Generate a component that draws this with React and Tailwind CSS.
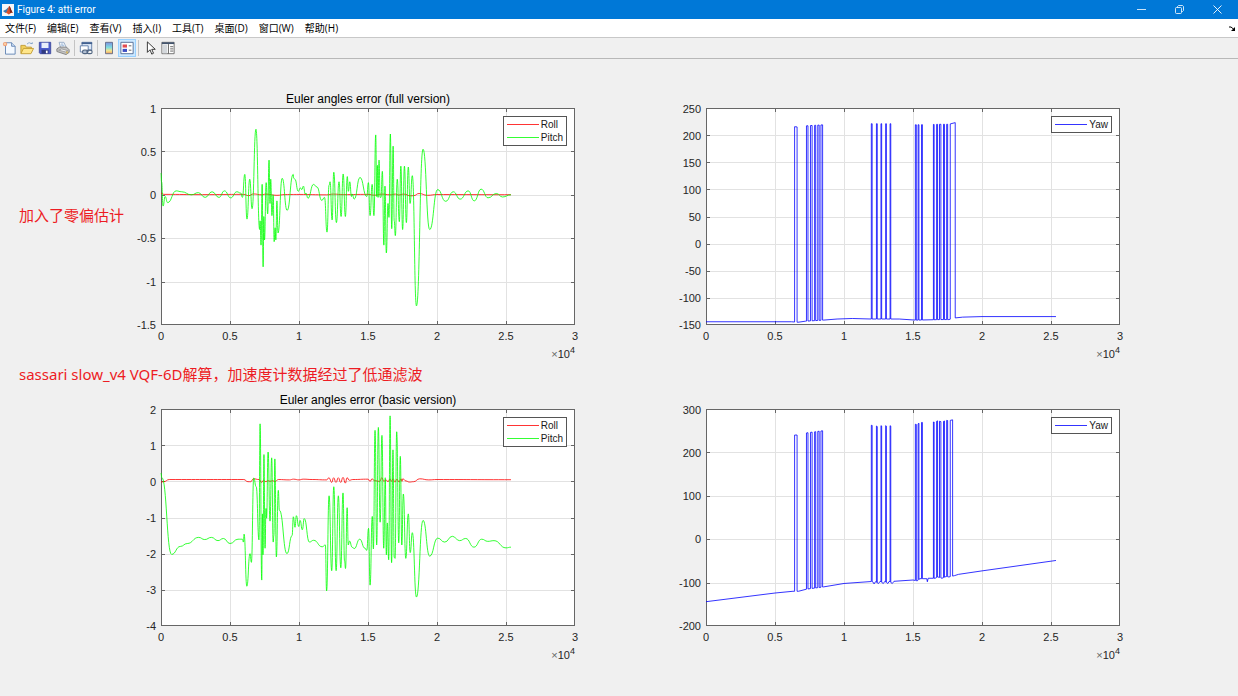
import { useMemo } from "react";

const X_TICKS = [0, 0.5, 1, 1.5, 2, 2.5, 3];
const VIEW_W = 414;
const VIEW_H = 217;

const MENUS = ["文件(F)", "编辑(E)", "查看(V)", "插入(I)", "工具(T)", "桌面(D)", "窗口(W)", "帮助(H)"];

// Series are listed by their turning points, x in units of 1e4 samples.
const ROLL_FULL = [
    [0, 0.02], [0.02, 0.005], [0.3, 0.002], [0.6, 0.005], [0.635, -0.01], [0.67, 0.01], [0.73, 0], [0.76, 0.008],
    [0.84, -0.006], [0.9, 0.003], [1, 0.004], [1.2, 0], [1.25, 0.008], [1.32, 0.002], [1.5, 0.005], [1.55, -0.004],
    [1.6, 0.008], [1.66, 0], [1.7, 0.008], [1.72, -0.002], [1.76, 0.008], [1.81, -0.012], [1.83, -0.01],
    [1.87, 0.015], [1.93, -0.006], [2, 0.003], [2.536, 0.001],
];

const PITCH_FULL = [
    [0, 0.25], [0.004, 0.15], [0.015, -0.13], [0.03, -0.02], [0.048, -0.09], [0.11, 0.045], [0.15, 0.035], [0.22, 0],
    [0.27, 0.025], [0.32, -0.03], [0.37, 0.035], [0.42, -0.03], [0.46, 0.045], [0.505, -0.035], [0.55, 0.035],
    [0.578, 0.02], [0.59, -0.03], [0.607, 0.235], [0.623, -0.28], [0.643, 0.18], [0.66, -0.16], [0.688, 0.755],
    [0.715, -0.4], [0.718, -0.3], [0.725, -0.58], [0.733, 0.12], [0.74, -0.83], [0.745, -0.25], [0.75, -0.52],
    [0.762, 0.14], [0.773, -0.22], [0.783, 0.4], [0.79, -0.1], [0.795, 0.18], [0.804, -0.24], [0.813, 0],
    [0.82, -0.54], [0.827, -0.38], [0.832, -0.52], [0.84, -0.07], [0.848, -0.44], [0.878, 0.19], [0.914, -0.18],
    [0.958, 0.235], [0.962, 0.19], [0.97, 0.18], [0.995, 0.04], [1.01, 0.08], [1.02, 0.06], [1.032, 0.1],
    [1.045, 0.01], [1.05, 0.02], [1.065, -0.04], [1.105, 0.12], [1.13, 0.09], [1.165, -0.065], [1.185, -0.03],
    [1.203, -0.43], [1.218, 0.11], [1.225, 0.15], [1.24, -0.29], [1.252, 0.26], [1.271, -0.32], [1.29, 0.15],
    [1.305, -0.25], [1.32, 0.24], [1.336, -0.25], [1.35, 0.21], [1.358, 0.04], [1.368, 0.15], [1.38, -0.02],
    [1.385, 0.01], [1.4, -0.05], [1.442, 0.2], [1.491, -0.02], [1.503, 0.14], [1.515, -0.24], [1.53, 0.12],
    [1.543, -0.24], [1.556, 0.69], [1.563, -0.02], [1.568, 0.34], [1.573, -0.03], [1.58, 0.4], [1.588, -0.03],
    [1.594, -0.03], [1.604, 0.27], [1.615, -0.58], [1.623, 0.1], [1.633, -0.67], [1.645, -0.1], [1.652, -0.26],
    [1.662, 0.7], [1.672, -0.39], [1.682, 0.56], [1.69, -0.3], [1.698, -0.47], [1.712, 0.18], [1.727, -0.31],
    [1.738, 0.33], [1.751, -0.4], [1.764, 0.33], [1.778, -0.32], [1.792, 0.32], [1.805, -0.1], [1.821, 0.22],
    [1.851, -1.28], [1.899, 0.525], [1.947, -0.4], [2.005, 0.06], [2.063, -0.075], [2.118, 0.035], [2.168, -0.05],
    [2.226, 0.045], [2.27, -0.07], [2.32, 0.065], [2.37, -0.035], [2.43, 0.015], [2.475, -0.025], [2.536, 0],
];

const ROLL_BASIC = [
    [0, -0.02], [0.02, -0.01], [0.06, 0.05], [0.6, 0.05], [0.63, -0.01], [0.65, -0.01], [0.67, 0.07], [0.71, 0.05],
    [0.73, -0.03], [0.742, 0.03], [0.76, -0.01], [0.775, 0.02], [0.79, 0], [0.81, 0.02], [0.825, -0.01], [0.85, 0.05],
    [0.93, 0.04], [0.96, 0.06], [1, 0.04], [1.03, 0.06], [1.1, 0.05], [1.2, 0.04], [1.217, 0.1], [1.237, -0.03],
    [1.251, 0.1], [1.268, -0.03], [1.285, 0.1], [1.302, -0.03], [1.319, 0.11], [1.336, -0.05], [1.348, 0.1],
    [1.365, 0.03], [1.39, 0.05], [1.5, 0.06], [1.515, 0], [1.53, 0.07], [1.545, 0.02], [1.585, 0], [1.6, 0.1],
    [1.615, 0], [1.63, 0.04], [1.645, -0.01], [1.66, 0.07], [1.67, 0], [1.682, 0.07], [1.694, -0.02], [1.71, 0.06],
    [1.725, -0.02], [1.74, 0.07], [1.746, 0], [1.752, 0.07], [1.775, 0.01], [1.8, -0.02], [1.83, -0.01],
    [1.875, 0.07], [1.94, 0.04], [2, 0.05], [2.536, 0.045],
];

const PITCH_BASIC = [
    [0, 0.23], [0.006, 0.1], [0.077, -2.02], [0.14, -1.8], [0.19, -1.72], [0.273, -1.55], [0.317, -1.61],
    [0.365, -1.55], [0.413, -1.64], [0.452, -1.58], [0.5, -1.72], [0.558, -1.6], [0.59, -1.6], [0.597, -1.68],
    [0.602, -1.46], [0.622, -2.9], [0.645, -2], [0.655, -2.24], [0.672, 0.09], [0.69, -0.15], [0.71, -1.62],
    [0.718, 1.59], [0.73, -2.73], [0.735, -0.9], [0.739, -2.03], [0.746, 0.74], [0.754, -1.85], [0.761, -0.75],
    [0.765, -1.02], [0.776, 0.81], [0.79, -1.1], [0.802, 0.65], [0.813, -1.68], [0.818, -1.5], [0.825, 0.62],
    [0.836, -2.09], [0.85, -0.25], [0.858, -0.8], [0.913, -2], [0.95, -1.5], [0.959, -0.98], [0.971, -1.27],
    [0.981, -0.95], [0.998, -1.25], [1.008, -1.08], [1.024, -1.34], [1.038, -1.03], [1.075, -1.68], [1.106, -1.63],
    [1.168, -1.81], [1.191, -1.76], [1.2, -3.03], [1.218, -0.4], [1.237, -2.47], [1.252, -0.15], [1.269, -2.47],
    [1.285, -0.4], [1.303, -2.39], [1.319, -0.32], [1.33, -2.2], [1.337, -2.41], [1.349, -0.73], [1.357, -1.76],
    [1.366, -1.65], [1.385, -1.82], [1.4, -1.86], [1.44, -1.6], [1.478, -1.85], [1.491, -1.91], [1.504, -1.3],
    [1.515, -2.87], [1.531, -0.97], [1.539, -1.87], [1.551, 1.41], [1.563, -1.76], [1.575, 1.49], [1.588, -1.13],
    [1.601, 1.27], [1.614, -1.85], [1.625, 0.1], [1.633, -2.03], [1.64, -1.15], [1.65, -2.17], [1.66, 1.81],
    [1.671, -2.25], [1.681, 0.87], [1.69, -2.1], [1.696, -2.13], [1.708, 1.37], [1.723, -1.7], [1.734, 0.69],
    [1.745, -1.76], [1.756, -0.35], [1.774, -2.13], [1.792, -0.9], [1.806, -1.97], [1.821, -1.42], [1.851, -3.2],
    [1.899, -1.08], [1.947, -2.07], [2.005, -1.57], [2.056, -1.68], [2.111, -1.52], [2.164, -1.64], [2.208, -1.58],
    [2.268, -1.82], [2.324, -1.6], [2.368, -1.66], [2.413, -1.64], [2.5, -1.84], [2.536, -1.82],
];

// Spans where the yaw error wraps around by 360 degrees.
const WRAPS = [
    [0.642, 0.66], [0.728, 0.739], [0.757, 0.769], [0.787, 0.795], [0.81, 0.82], [0.833, 0.845],
    [1.198, 1.204], [1.235, 1.241], [1.268, 1.273], [1.302, 1.307], [1.334, 1.339],
    [1.517, 1.524], [1.537, 1.543], [1.562, 1.568],
    [1.648, 1.653], [1.671, 1.678], [1.692, 1.702], [1.721, 1.728], [1.744, 1.751],
];

const YAW_FULL_BASE = [
    [0, -144], [0.62, -144], [0.665, -145], [0.72, -143], [0.85, -141], [0.95, -139], [1.06, -138], [1.2, -139],
    [1.4, -139], [1.52, -141], [1.7, -140], [1.76, -140], [1.805, -137], [1.86, -135.5], [2, -134.5], [2.536, -134.5],
];

const YAW_BASIC_BASE = [
    [0, -144], [0.5, -124], [0.63, -120], [0.67, -120], [0.73, -115], [0.85, -110], [1, -102], [1.2, -97.5],
    [1.208, -98], [1.218, -103], [1.228, -98], [1.25, -102], [1.262, -97], [1.285, -102], [1.296, -97],
    [1.318, -102], [1.328, -97], [1.35, -102], [1.362, -97], [1.5, -94], [1.53, -96], [1.55, -91], [1.6, -91],
    [1.604, -98], [1.61, -90], [1.66, -90], [1.68, -87], [1.71, -90], [1.74, -86], [1.76, -87], [1.8, -84],
    [1.83, -81], [2, -73], [2.536, -49],
];

function addWraps(base, wraps) {
    const level = (x) => {
        const i = base.findIndex((p) => p[0] >= x);
        if (i <= 0) return base[0][1];
        const [x0, y0] = base[i - 1];
        const [x1, y1] = base[i];
        return y0 + ((x - x0) / (x1 - x0)) * (y1 - y0);
    };
    const points = base.filter(([x]) => !wraps.some(([a, b]) => x >= a && x <= b));
    for (const [a, b] of wraps) {
        points.push([a, level(a)], [a, level(a) + 360], [b, level(b) + 360], [b, level(b)]);
    }
    // sort is stable, so the two points of each vertical edge stay in order
    return points.sort((p, q) => p[0] - q[0]);
}

const YAW_FULL = addWraps(YAW_FULL_BASE, [...WRAPS, [1.77, 1.806]]);
const YAW_BASIC = addWraps(YAW_BASIC_BASE, [...WRAPS, [1.77, 1.787]]);

const FULL_SERIES = [
    { name: "Roll", color: "#ff0000", points: ROLL_FULL, smooth: true },
    { name: "Pitch", color: "#00ff00", points: PITCH_FULL, smooth: true },
];
const BASIC_SERIES = [
    { name: "Roll", color: "#ff0000", points: ROLL_BASIC, smooth: true },
    { name: "Pitch", color: "#00ff00", points: PITCH_BASIC, smooth: true },
];
const YAW_FULL_SERIES = [{ name: "Yaw", color: "#0000ff", points: YAW_FULL }];
const YAW_BASIC_SERIES = [{ name: "Yaw", color: "#0000ff", points: YAW_BASIC }];

const FULL_TICKS = [1, 0.5, 0, -0.5, -1, -1.5];
const BASIC_TICKS = [2, 1, 0, -1, -2, -3, -4];
const YAW_FULL_TICKS = [250, 200, 150, 100, 50, 0, -50, -100, -150];
const YAW_BASIC_TICKS = [300, 200, 100, 0, -100, -200];

function toPath(points, smooth, max, min) {
    let d = "";
    let px = 0;
    let py = 0;
    points.forEach(([vx, vy], i) => {
        const x = (vx / 3) * VIEW_W;
        const y = ((max - vy) / (max - min)) * VIEW_H;
        if (i === 0) d += `M${x.toFixed(2)} ${y.toFixed(2)}`;
        else if (smooth) {
            const mx = ((px + x) / 2).toFixed(2);
            d += `C${mx} ${py.toFixed(2)} ${mx} ${y.toFixed(2)} ${x.toFixed(2)} ${y.toFixed(2)}`;
        } else d += `L${x.toFixed(2)} ${y.toFixed(2)}`;
        px = x;
        py = y;
    });
    return d;
}

function Plot({ series, ticks, className }) {
    const max = ticks[0];
    const min = ticks[ticks.length - 1];
    const paths = useMemo(
        () => series.map((s) => ({ ...s, d: toPath(s.points, s.smooth, max, min) })),
        [series, max, min]
    );

    return (
        <div className={`relative min-h-0 ${className}`}>
            <svg
                className="block h-full w-full overflow-visible"
                viewBox={`0 0 ${VIEW_W} ${VIEW_H}`}
                preserveAspectRatio="none"
                fill="none"
            >
                <rect width={VIEW_W} height={VIEW_H} fill="#fff" />
                {X_TICKS.slice(1, -1).map((t) => {
                    const x = Math.round((t / 3) * VIEW_W) + 0.5;
                    return (
                        <g key={t}>
                            <path d={`M${x} 0V${VIEW_H}`} stroke="#e2e2e2" />
                            <path d={`M${x} 0v4M${x} ${VIEW_H}v-4`} stroke="#666" />
                        </g>
                    );
                })}
                {ticks.slice(1, -1).map((t) => {
                    const y = Math.round(((max - t) / (max - min)) * VIEW_H) + 0.5;
                    return (
                        <g key={t}>
                            <path d={`M0 ${y}H${VIEW_W}`} stroke="#e2e2e2" />
                            <path d={`M0 ${y}h4M${VIEW_W} ${y}h-4`} stroke="#666" />
                        </g>
                    );
                })}
                <rect x="0.5" y="0.5" width={VIEW_W - 1} height={VIEW_H - 1} stroke="#666" />
                {paths.map((s) => (
                    <path key={s.name} d={s.d} stroke={s.color} strokeWidth="0.8" />
                ))}
            </svg>
            <ul className="absolute top-2 right-2 border border-[#555] bg-white px-[3px] py-px text-[10px] leading-[13px] text-[#1a1a1a]">
                {series.map((s) => (
                    <li key={s.name} className="flex items-center gap-0.5">
                        <svg width="32" height="1" viewBox="0 0 32 1">
                            <path d="M0 .5H32" stroke={s.color} strokeWidth="0.8" />
                        </svg>
                        {s.name}
                    </li>
                ))}
            </ul>
        </div>
    );
}

function YLabels({ ticks, className }) {
    return (
        <div className={`flex flex-col justify-between pt-px pr-[5px] text-[11px] text-[#262626] ${className}`}>
            {ticks.map((t) => (
                <span key={t} className="flex h-0 items-center justify-end">{t}</span>
            ))}
        </div>
    );
}

function XLabels({ className }) {
    return (
        <div className={`pt-[3px] text-[11px] leading-4 text-[#262626] ${className}`}>
            <div className="flex justify-between">
                {X_TICKS.map((t) => (
                    <span key={t} className="flex w-0 justify-center">{t}</span>
                ))}
            </div>
            <div className="flex items-center justify-end">
                <span className="text-[#666]">×</span>
                <span>10</span>
                <span className="pb-2 text-[9px] leading-3">4</span>
            </div>
        </div>
    );
}

function Tool({ label, active, children }) {
    return (
        <button
            type="button"
            aria-label={label}
            className={`flex h-[18px] w-[18px] items-center justify-center border ${
                active ? "border-[#99d1ff] bg-[#cce8ff]" : "border-transparent"
            }`}
        >
            <svg width="14" height="14" viewBox="0 0 16 16" fill="none" className="shrink-0">
                {children}
            </svg>
        </button>
    );
}

function Separator() {
    return <span className="mx-0.5 h-4 w-px bg-[#c4c4c4]" />;
}

function Toolbar() {
    return (
        <div className="flex h-[21px] shrink-0 items-center border-b border-[#b8b8b8] bg-[#f0f0f0]">
            <Tool label="新建">
                <path d="M4 2h7l4 4v9H4z" fill="#f4f9ff" stroke="#5b7fb0" />
                <path d="M11 2v4h4" fill="#cfe0f5" stroke="#5b7fb0" />
                <circle cx="3.500" cy="3.500" r="2.500" fill="#f0a27c" />
                <circle cx="3.500" cy="3.500" r="1.200" fill="#ffd9a8" />
            </Tool>
            <Tool label="打开">
                <path d="M1 14V5h5l1 2h6v2" fill="#f2d05c" stroke="#c09a30" />
                <path d="M1 14.500L4 8.500h11.500l-3 6z" fill="#ffe68a" stroke="#c09a30" />
                <path d="M8 3.500c2-2 4-2 5 0" stroke="#7fa2c8" />
                <path d="M11.500 3.500h3V1z" fill="#7fa2c8" />
            </Tool>
            <Tool label="保存">
                <path d="M1.500 1.500h13v13h-12l-1-1z" fill="#4c5ccc" stroke="#3c489c" />
                <path d="M4 2h8v6H4z" fill="#e8eefb" />
                <path d="M4 10h8v4.500H4z" fill="#2f3a80" />
                <path d="M9 11h2v3H9z" fill="#fff" />
            </Tool>
            <Tool label="打印">
                <path d="M5.500 8L3.500 1.500H9L12 8" fill="#fff" stroke="#8fa6c4" />
                <path d="M5.500 3.500h3M6 5.500h3.500" stroke="#7ba0ce" />
                <path d="M1 9l3-2h8l3 3v3l-3.500 2.500L1 12z" fill="#c4c4c4" stroke="#7a7a7a" />
                <path d="M3 10.500l8 2 2.500-1.500-7-2z" fill="#f2f2f2" stroke="#999" />
                <circle cx="12.500" cy="13" r="1.200" fill="#d8b860" />
            </Tool>
            <Separator />
            <Tool label="链接绘图">
                <path d="M3.500 1.500h11v9h-11z" fill="#dce8f8" stroke="#5a78a6" />
                <path d="M3 2.500h12" stroke="#42608f" strokeWidth="2" />
                <path d="M1.500 5.500h9v7h-9z" fill="#fff" stroke="#5a78a6" />
                <rect x="4" y="10.500" width="6" height="4" rx="2" stroke="#526783" strokeWidth="1.300" />
                <rect x="9" y="10.500" width="6" height="4" rx="2" stroke="#526783" strokeWidth="1.300" />
            </Tool>
            <Separator />
            <Tool label="插入颜色栏">
                <defs>
                    <linearGradient id="colorbar" x1="0" y1="0" x2="0" y2="1">
                        <stop offset="0" stopColor="#7b8fe0" />
                        <stop offset="0.45" stopColor="#7fdde0" />
                        <stop offset="0.75" stopColor="#f4e58b" />
                        <stop offset="1" stopColor="#ee9b62" />
                    </linearGradient>
                </defs>
                <path d="M4 1.500h8v13H4z" fill="url(#colorbar)" stroke="#5f6a84" />
            </Tool>
            <Tool label="插入图例" active>
                <path d="M1 1.500h14v13H1z" fill="#fff" stroke="#4a6690" />
                <path d="M3 4h5v3.500H3z" fill="#e14b50" />
                <path d="M3 9h5v3.500H3z" fill="#3d4fc4" />
                <path d="M10 5.500h3M10 10.500h3" stroke="#555" />
            </Tool>
            <Separator />
            <Tool label="编辑绘图">
                <path d="M5 1v12l3-3 2 5 2-1-2-4.500h4z" fill="#fff" stroke="#222" />
            </Tool>
            <Tool label="属性检查器">
                <path d="M1 1.500h14v13H1z" fill="#fff" stroke="#666" />
                <path d="M1 2.500h14" stroke="#42546d" strokeWidth="2" />
                <path d="M2 4h5v10H2z" fill="#d4d8dc" />
                <path d="M8.500 3.500v11M10.500 6.500h3.500M10.500 9h3.500M10.500 11.500h3.500" stroke="#555" />
            </Tool>
        </div>
    );
}

function TitleBar() {
    return (
        <header className="flex h-[19px] shrink-0 items-center justify-between bg-[#0078d7] pl-0.5 text-white">
            <div className="flex items-center gap-[3px]">
                <svg width="12" height="12" viewBox="0 0 12 12">
                    <rect width="12" height="12" fill="#f4f6f8" />
                    <path d="M1 7l3-1.500L6.500 3 5.500 7.500 3.500 9z" fill="#3f77ad" />
                    <path d="M3.500 9C5.500 8 6 3 7.200 2c1 0 1.800 4.500 3.800 7C9 7.800 8 10 6.500 10.500 5.500 9.500 5 9 3.500 9z" fill="#d9512c" />
                    <path d="M7.200 2c1 0 1.800 4.500 3.800 7-1.500-.8-2.200-.5-3 .3C8 7 7.500 4 7.200 2z" fill="#7d2418" />
                </svg>
                <h1 className="font-['Roboto',sans-serif] text-[10px] leading-4">Figure 4: atti error</h1>
            </div>
            <div className="flex pr-0.5">
                <button type="button" aria-label="最小化" className="flex h-[19px] w-[38px] items-center justify-center">
                    <svg width="9" height="9" viewBox="0 0 9 9" fill="none" stroke="#fff">
                        <path d="M0 4.500h9" strokeWidth="0.8" />
                    </svg>
                </button>
                <button type="button" aria-label="还原" className="flex h-[19px] w-[38px] items-center justify-center">
                    <svg width="9" height="9" viewBox="0 0 9 9" fill="none" stroke="#fff" strokeWidth="0.8">
                        <rect x="0.500" y="2.500" width="6" height="6" rx="1" />
                        <path d="M2.500 2.500V1.500l1-1h4l1 1v4l-1 1h-1" />
                    </svg>
                </button>
                <button type="button" aria-label="关闭" className="flex h-[19px] w-[38px] items-center justify-center">
                    <svg width="9" height="9" viewBox="0 0 9 9" fill="none" stroke="#fff" strokeWidth="0.9">
                        <path d="M.5.5l8 8M8.500.5l-8 8" />
                    </svg>
                </button>
            </div>
        </header>
    );
}

function MenuBar() {
    return (
        <nav className="flex h-[19px] shrink-0 items-center justify-between border-b border-[#c8c8c8] bg-white pr-[3px] pl-[5px] text-[10px] leading-4 text-black">
            <div className="flex gap-[11px]">
                {MENUS.map((m) => (
                    <button key={m} type="button">{m}</button>
                ))}
            </div>
            <button type="button" aria-label="停靠">
                <svg width="6" height="5" viewBox="0 0 6 5" fill="none">
                    <path d="M0 1h2l3 2.500" stroke="#000" />
                    <path d="M6 1v4H2z" fill="#000" />
                </svg>
            </button>
        </nav>
    );
}

export default function App() {
    return (
        <div className="flex h-screen min-h-[480px] flex-col bg-[#f0f0f0] font-['Open_Sans','Noto_Sans_CJK_SC',sans-serif]">
            <TitleBar />
            <MenuBar />
            <Toolbar />
            <main className="grid min-h-0 flex-1 grid-cols-[161fr_414fr_131fr_414fr_118fr] grid-rows-[minmax(0,49fr)_minmax(0,217fr)_minmax(0,84fr)_minmax(0,217fr)_minmax(0,70fr)] font-['Liberation_Sans',Arial,sans-serif]">
                <h2 className="col-start-2 row-start-1 self-end pb-px text-center text-[12px] leading-4 text-black">
                    Euler angles error (full version)
                </h2>
                <p className="col-start-1 row-start-2 self-center pb-1 pl-[19px] font-['Noto_Sans','Noto_Sans_CJK_SC',sans-serif] text-[15px] leading-5 text-[#ed1c24]">
                    加入了零偏估计
                </p>
                <YLabels ticks={FULL_TICKS} className="col-start-1 row-start-2" />
                <Plot series={FULL_SERIES} ticks={FULL_TICKS} className="col-start-2 row-start-2" />
                <YLabels ticks={YAW_FULL_TICKS} className="col-start-3 row-start-2" />
                <Plot series={YAW_FULL_SERIES} ticks={YAW_FULL_TICKS} className="col-start-4 row-start-2" />

                <XLabels className="col-start-2 row-start-3" />
                <XLabels className="col-start-4 row-start-3" />
                <p className="col-span-3 col-start-1 row-start-3 self-end pb-[25px] pl-[19px] font-['Noto_Sans','Noto_Sans_CJK_SC',sans-serif] text-[15px] leading-5 text-[#ed1c24]">
                    sassari slow_v4 VQF-6D解算，加速度计数据经过了低通滤波
                </p>
                <h2 className="col-start-2 row-start-3 self-end pb-px text-center text-[12px] leading-4 text-black">
                    Euler angles error (basic version)
                </h2>

                <YLabels ticks={BASIC_TICKS} className="col-start-1 row-start-4" />
                <Plot series={BASIC_SERIES} ticks={BASIC_TICKS} className="col-start-2 row-start-4" />
                <YLabels ticks={YAW_BASIC_TICKS} className="col-start-3 row-start-4" />
                <Plot series={YAW_BASIC_SERIES} ticks={YAW_BASIC_TICKS} className="col-start-4 row-start-4" />

                <XLabels className="col-start-2 row-start-5" />
                <XLabels className="col-start-4 row-start-5" />
            </main>
        </div>
    );
}
